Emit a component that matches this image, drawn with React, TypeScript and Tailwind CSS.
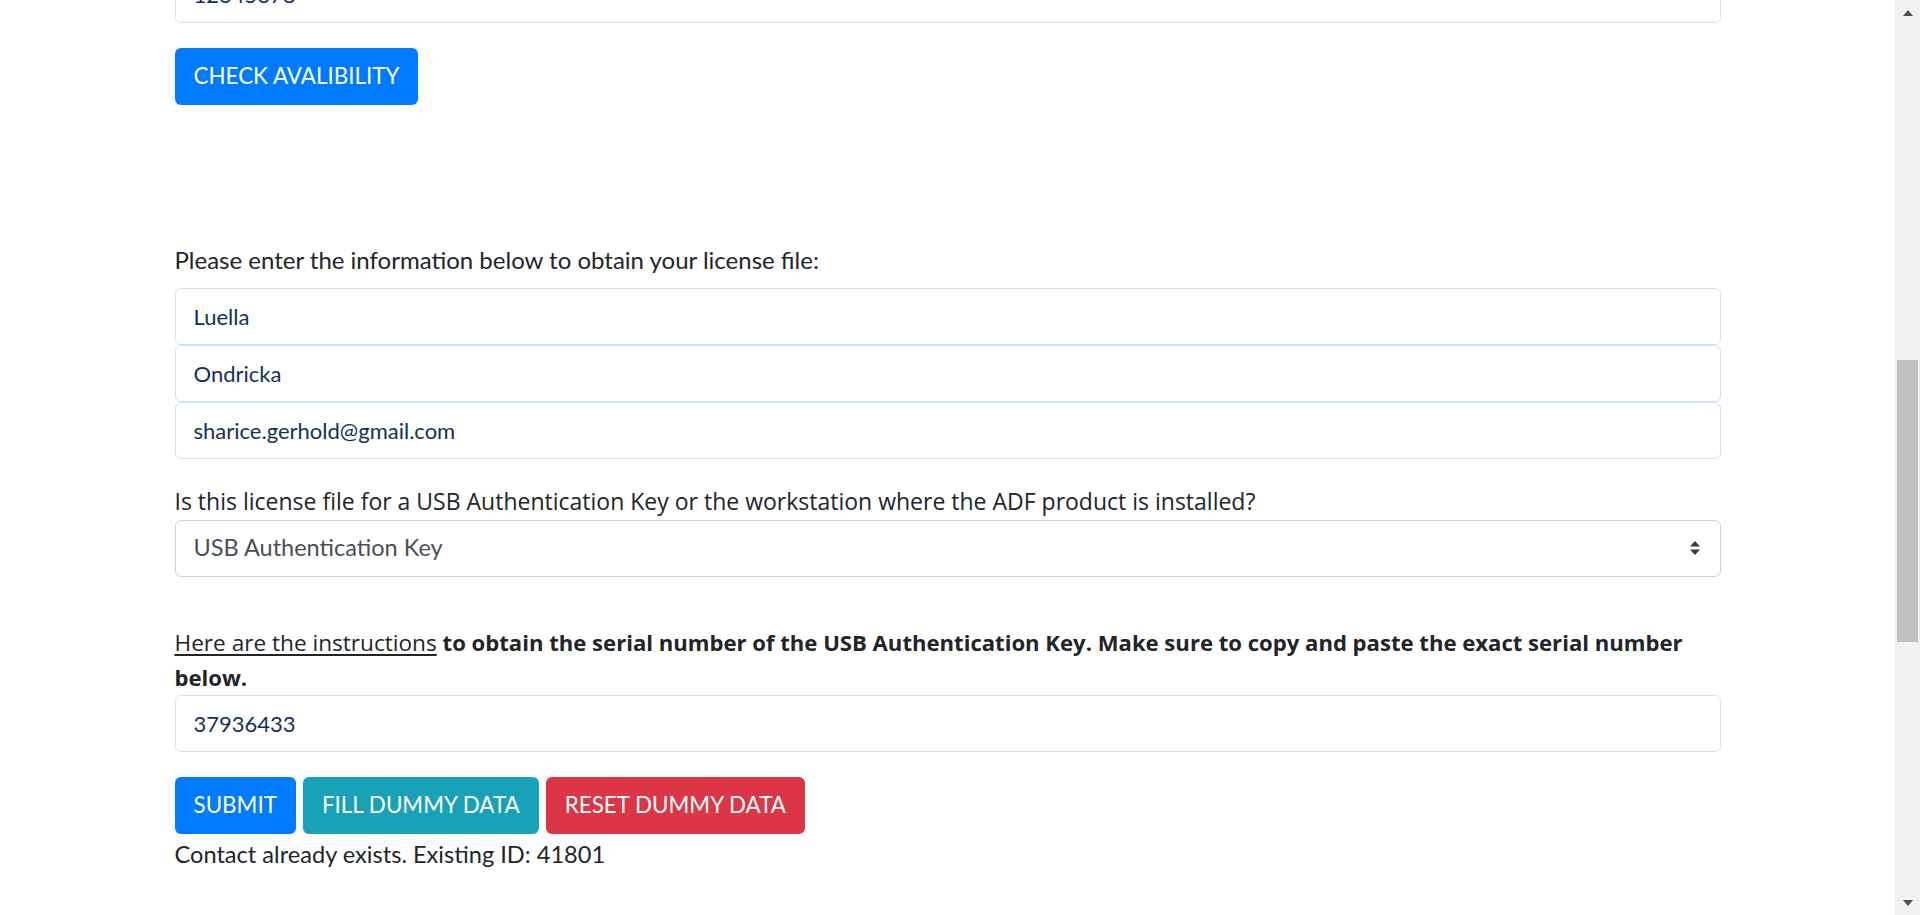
import { useState } from 'react';

const segoe = 'font-["Lato","Noto_Sans",sans-serif]';
const nunito = 'font-["Open_Sans","Noto_Sans",sans-serif]';

function TextInput({ value, onChange, className = '' }: { value: string; onChange: (v: string) => void; className?: string }) {
  return (
    <input
      type="text"
      value={value}
      onChange={(e) => onChange(e.target.value)}
      className={`block w-full h-[57px] px-[18px] border border-[#cfe3f8] rounded-[6px] bg-white text-[22px] text-[#14305a] outline-none ${segoe} ${className}`}
    />
  );
}

function SelectArrows() {
  return (
    <svg width="12" height="16" viewBox="0 0 12 16" className="text-[#343a40]">
      <path d="M6 1 L11 6.5 H1 Z" fill="currentColor" />
      <path d="M6 15 L11 9.5 H1 Z" fill="currentColor" />
    </svg>
  );
}

function Scrollbar() {
  return (
    <div className="w-[25px] h-full bg-[#f1f1f1] flex flex-col items-center shrink-0">
      <div className="h-[25px] w-full flex items-center justify-center">
        <svg width="10" height="6" viewBox="0 0 10 6"><path d="M5 0 L10 6 H0 Z" fill="#505050" /></svg>
      </div>
      <div className="h-[335px]" />
      <div className="h-[282px] w-[21px] bg-[#c1c1c1]" />
      <div className="flex-1" />
      <div className="h-[25px] w-full flex items-center justify-center">
        <svg width="10" height="6" viewBox="0 0 10 6"><path d="M0 0 H10 L5 6 Z" fill="#505050" /></svg>
      </div>
    </div>
  );
}

export default function App() {
  const [serialTop, setSerialTop] = useState('12345678');
  const [first, setFirst] = useState('Luella');
  const [last, setLast] = useState('Ondricka');
  const [email, setEmail] = useState('sharice.gerhold@gmail.com');
  const [serial, setSerial] = useState('37936433');
  const [keyType, setKeyType] = useState('usb');

  const fillDummy = () => {
    setFirst('Luella');
    setLast('Ondricka');
    setEmail('sharice.gerhold@gmail.com');
    setSerial('37936433');
  };

  const resetDummy = () => {
    setFirst('');
    setLast('');
    setEmail('');
    setSerial('');
  };

  const btn = `h-[57px] px-[19px] rounded-[6px] text-white text-[22.4px] uppercase leading-none ${segoe}`;

  return (
    <div className="flex h-[915px] w-full overflow-hidden bg-white text-[#212529]">
      <main className="flex-1 overflow-hidden">
        <div className="mx-auto w-[1546px] -mt-[34px]">
          <TextInput value={serialTop} onChange={setSerialTop} />

          <button className={`${btn} mt-[25px] bg-[#007bff]`}>Check Avalibility</button>

          <p className={`mt-[137px] mb-[10px] text-[24px] leading-[36px] ${segoe}`}>
            Please enter the information below to obtain your license file:
          </p>
          <TextInput value={first} onChange={setFirst} />
          <TextInput value={last} onChange={setLast} />
          <TextInput value={email} onChange={setEmail} />

          <p className={`mt-[25px] text-[23px] leading-[34.5px] ${nunito}`}>
            Is this license file for a USB Authentication Key or the workstation where the ADF product is installed?
          </p>
          <div className="relative mt-px">
            <select
              value={keyType}
              onChange={(e) => setKeyType(e.target.value)}
              className={`block w-full h-[57px] pl-[18px] pr-[48px] appearance-none border border-[#ced4da] rounded-[6px] bg-white text-[23.5px] text-[#495057] outline-none ${segoe}`}
            >
              <option value="usb">USB Authentication Key</option>
              <option value="ws">Workstation</option>
            </select>
            <span className="pointer-events-none absolute right-[20px] top-1/2 -translate-y-1/2 flex">
              <SelectArrows />
            </span>
          </div>

          <p className={`mt-[48px] text-[22.6px] leading-[34.5px] ${nunito}`}>
            <a href="#" className="underline underline-offset-[3px] text-[#212529]">Here are the instructions</a>{' '}
            <strong className="font-bold text-[22.1px]">
              to obtain the serial number of the USB Authentication Key. Make sure to copy and paste the exact serial number below.
            </strong>
          </p>
          <TextInput value={serial} onChange={setSerial} className="-mt-px" />

          <div className="mt-[25px] flex gap-[7px]">
            <button className={`${btn} bg-[#007bff]`}>Submit</button>
            <button onClick={fillDummy} className={`${btn} bg-[#17a2b8]`}>Fill Dummy Data</button>
            <button onClick={resetDummy} className={`${btn} bg-[#dc3545]`}>Reset Dummy Data</button>
          </div>
          <p className={`mt-[2px] text-[23.6px] leading-[36px] ${segoe}`}>Contact already exists. Existing ID: 41801</p>
        </div>
      </main>
      <Scrollbar />
    </div>
  );
}
